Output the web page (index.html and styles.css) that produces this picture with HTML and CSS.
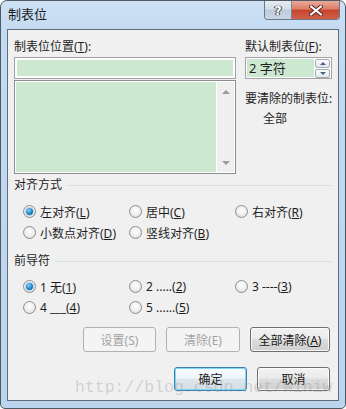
FILE: index.html
```html
<!DOCTYPE html>
<html lang="zh-CN">
<head>
  <meta charset="UTF-8" />
  <title>制表位</title>
  <link rel="stylesheet" href="styles.css">
</head>
<body>
  <div class="window">
    <!-- title bar with caption buttons -->
    <div class="titlebar">
      <span class="title">制表位</span>
      <div class="caption-buttons">
        <span class="cap-btn help">?</span>
        <span class="cap-btn close">
          <svg width="14" height="11" viewBox="0 0 14 11">
            <path d="M2 1.5 L12 9.5 M12 1.5 L2 9.5" stroke="#5a2a22" stroke-width="4" stroke-linecap="round" />
            <path d="M2 1.5 L12 9.5 M12 1.5 L2 9.5" stroke="#fff" stroke-width="2.2" stroke-linecap="round" />
          </svg>
        </span>
      </div>
    </div>

    <div class="panel">
      <div class="top">
        <div class="left-col">
          <div class="label">制表位位置(<u>T</u>):</div>
          <div class="field"></div>
          <div class="listbox">
            <div class="list-area"></div>
            <div class="scrollbar">
              <span class="arrow up"></span>
              <span class="arrow down"></span>
            </div>
          </div>
        </div>
        <div class="right-col">
          <div class="label">默认制表位(<u>F</u>):</div>
          <div class="spin">
            <span class="spin-text">2 字符</span>
            <div class="spin-btns">
              <span class="spin-btn"><span class="tri up"></span></span>
              <span class="spin-btn"><span class="tri down"></span></span>
            </div>
          </div>
          <div class="clear-label">要清除的制表位:</div>
          <div class="clear-value">全部</div>
        </div>
      </div>

      <div class="section">
        <div class="section-title"><span>对齐方式</span><span class="rule"></span></div>
        <div class="radio-grid">
          <label class="radio"><span class="dot checked"></span><span>左对齐(<u>L</u>)</span></label>
          <label class="radio"><span class="dot"></span><span>居中(<u>C</u>)</span></label>
          <label class="radio"><span class="dot"></span><span>右对齐(<u>R</u>)</span></label>
          <label class="radio"><span class="dot"></span><span>小数点对齐(<u>D</u>)</span></label>
          <label class="radio"><span class="dot"></span><span>竖线对齐(<u>B</u>)</span></label>
        </div>
      </div>

      <div class="section second">
        <div class="section-title"><span>前导符</span><span class="rule"></span></div>
        <div class="radio-grid">
          <label class="radio"><span class="dot checked"></span><span>1 无(<u>1</u>)</span></label>
          <label class="radio"><span class="dot"></span><span>2 .....(<u>2</u>)</span></label>
          <label class="radio"><span class="dot"></span><span>3 ----(<u>3</u>)</span></label>
          <label class="radio"><span class="dot"></span><span>4 ___(<u>4</u>)</span></label>
          <label class="radio"><span class="dot"></span><span>5 ......(<u>5</u>)</span></label>
        </div>
      </div>

      <div class="button-row">
        <button class="btn disabled w73">设置(S)</button>
        <button class="btn disabled w74">清除(E)</button>
        <button class="btn w80">全部清除(<u>A</u>)</button>
      </div>
      <div class="button-row bottom">
        <button class="btn default w73">确定</button>
        <button class="btn w73">取消</button>
      </div>
    </div>

    <div class="watermark">http://blog.csdn.net/winiw</div>
  </div>
</body>
</html>
```

FILE: styles.css
```css
* {
  box-sizing: border-box;
  margin: 0;
  padding: 0;
}

body {
  width: 346px;
  height: 409px;
  overflow: hidden;
  background: #fff;
  font-family: "Noto Sans", "Noto Sans CJK SC", sans-serif;
  font-size: 12px;
  color: #1e1e1e;
}

u {
  text-decoration: underline;
  text-underline-offset: 1px;
}

/* Window frame */
.window {
  position: relative;
  width: 346px;
  height: 409px;
  border: 1px solid #4f5962;
  border-radius: 7px 7px 5px 5px;
  background: linear-gradient(180deg, #cfe2f5 0%, #c2daf2 8%, #bcd5ee 100%);
  padding: 0 6px 7px 6px;
  display: flex;
  flex-direction: column;
}

.titlebar {
  height: 28px;
  display: flex;
  align-items: flex-start;
  justify-content: space-between;
}

.title {
  margin-left: 1px;
  line-height: 27px;
  font-size: 13px;
  color: #1b1b1b;
}

.caption-buttons {
  display: flex;
  margin-right: -1px;
  border: 1px solid #6b7787;
  border-top: none;
  border-radius: 0 0 4px 4px;
  overflow: hidden;
  height: 19px;
}

.cap-btn {
  display: flex;
  align-items: center;
  justify-content: center;
  height: 18px;
}

.help {
  width: 27px;
  background: linear-gradient(180deg, #e5ebf2 0%, #d3dce7 45%, #bccadb 50%, #c9d6e4 100%);
  border-right: 1px solid #7d8896;
  color: #fff;
  font-family: "DejaVu Sans", sans-serif;
  font-weight: bold;
  font-size: 13px;
  text-shadow: 0 0 1px #333, 0 0 1px #333, 1px 0 0 #444, -1px 0 0 #444;
}

.close {
  width: 47px;
  background: linear-gradient(180deg, #e9a99a 0%, #dc7e68 45%, #c7432c 50%, #d2604a 100%);
}

/* Main client area */
.panel {
  flex: 1;
  border: 1px solid #5f6e7c;
  background: #f0f0f0;
  padding: 8px 6px 0 6px;
  display: flex;
  flex-direction: column;
}

.top {
  display: flex;
  gap: 9px;
}

.left-col {
  width: 222px;
}

.right-col {
  width: 87px;
  white-space: nowrap;
}

.label {
  line-height: 17px;
  margin-bottom: 2px;
}

.field {
  height: 22px;
  border: 1px solid #a3a3a3;
  background: #cde8d0;
  box-shadow: inset 0 0 0 2px #fff;
}

.listbox {
  margin-top: 1px;
  height: 94px;
  border: 1px solid #8e8e8e;
  background: #fff;
  padding: 1px;
  display: flex;
}

.list-area {
  flex: 1;
  background: #cde8d0;
}

.scrollbar {
  width: 17px;
  margin-left: 1px;
  background: #efefef;
  display: flex;
  flex-direction: column;
  justify-content: space-between;
  align-items: center;
  padding: 8px 0 7px;
}

.arrow {
  width: 0;
  height: 0;
  border-left: 4px solid transparent;
  border-right: 4px solid transparent;
}

.arrow.up {
  border-bottom: 4px solid #9a9a9a;
}

.arrow.down {
  border-top: 4px solid #9a9a9a;
}

.spin {
  height: 22px;
  border: 1px solid #a3a3a3;
  background: #cde8d0;
  box-shadow: inset 0 0 0 1px #fff;
  display: flex;
  align-items: center;
  justify-content: space-between;
  padding: 1px 1px 1px 3px;
}

.spin-text {
  font-size: 13px;
  line-height: 18px;
}

.spin-btns {
  display: flex;
  flex-direction: column;
  gap: 1px;
  background: #fff;
  padding-left: 1px;
}

.spin-btn {
  width: 15px;
  height: 9px;
  border: 1px solid #a6abb2;
  border-radius: 2px;
  background: linear-gradient(180deg, #fbfbfb, #e3e6ea);
  display: flex;
  align-items: center;
  justify-content: center;
}

.tri {
  width: 0;
  height: 0;
  border-left: 3px solid transparent;
  border-right: 3px solid transparent;
}

.tri.up {
  border-bottom: 3px solid #4b5d85;
}

.tri.down {
  border-top: 3px solid #4b5d85;
}

.clear-label {
  margin-top: 12px;
  line-height: 16px;
}

.clear-value {
  margin-top: 4px;
  padding-left: 18px;
  line-height: 16px;
}

/* Group sections */
.section {
  margin-top: 3px;
}

.section.second {
  margin-top: 10px;
}

.section-title {
  display: flex;
  align-items: center;
  line-height: 16px;
}

.rule {
  flex: 1;
  height: 1px;
  margin-left: 5px;
  background: #d5dfe5;
}

.radio-grid {
  margin-top: 8px;
  padding-left: 9px;
  display: grid;
  grid-template-columns: 106px 106px 106px;
  grid-auto-rows: 21px;
  white-space: nowrap;
}

.section.second .radio-grid {
  margin-top: 7px;
}

.radio {
  display: flex;
  align-items: center;
  gap: 4px;
}

.dot {
  flex: none;
  width: 13px;
  height: 13px;
  border-radius: 50%;
  border: 1px solid #8f8f8f;
  background: radial-gradient(circle at 50% 40%, #ffffff 0%, #f1f1f1 45%, #d4d4d4 100%);
  display: flex;
  align-items: center;
  justify-content: center;
}

.dot.checked::after {
  content: "";
  width: 7px;
  height: 7px;
  border-radius: 50%;
  background: radial-gradient(circle at 40% 35%, #8fd3f7 0%, #1b7fc4 55%, #0d4f85 100%);
  box-shadow: 0 0 0 1px #bcd7ea;
}

/* Push buttons */
.button-row {
  margin-top: 9px;
  margin-right: 2px;
  display: flex;
  justify-content: flex-end;
  gap: 10px;
}

.button-row.bottom {
  margin-top: 15px;
}

.btn {
  height: 25px;
  font-family: "Noto Sans", "Noto Sans CJK SC", sans-serif;
  font-size: 12px;
  color: #1a1a1a;
  border: 1px solid #707070;
  border-radius: 3px;
  background: linear-gradient(180deg, #f2f2f2 0%, #ebebeb 45%, #dddddd 50%, #cfcfcf 100%);
  box-shadow: inset 0 0 0 1px rgba(255, 255, 255, 0.8);
  white-space: nowrap;
}

.button-row.bottom .btn {
  height: 24px;
}

.btn.disabled {
  color: #a3a3a3;
  border-color: #adb2b5;
  background: #f4f4f4;
  box-shadow: none;
}

.btn.default {
  border-color: #3c7fb1;
  box-shadow: inset 0 0 0 1px #7fd6f7;
  background: linear-gradient(180deg, #f6fbfe 0%, #eef6fb 45%, #dde6ec 50%, #d3dde3 100%);
}

.w73 { width: 73px; }
.w74 { width: 74px; }
.w80 { width: 80px; }

/* Blog watermark over the dialog */
.watermark {
  position: absolute;
  left: 74px;
  top: 377px;
  font-family: "Liberation Mono", monospace;
  font-size: 16.5px;
  line-height: 20px;
  color: rgba(150, 150, 150, 0.35);
  pointer-events: none;
}
```
